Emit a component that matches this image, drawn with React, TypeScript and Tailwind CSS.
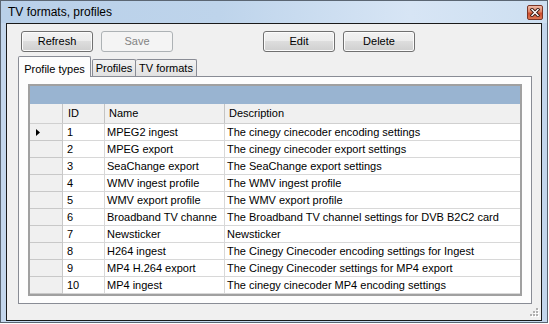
import React from "react";

const rows: [string, string, string][] = [
  ["1", "MPEG2 ingest", "The cinegy cinecoder encoding settings"],
  ["2", "MPEG export", "The cinegy cinecoder export settings"],
  ["3", "SeaChange export", "The SeaChange export settings"],
  ["4", "WMV ingest profile", "The WMV ingest profile"],
  ["5", "WMV export profile", "The WMV export profile"],
  ["6", "Broadband TV channe", "The Broadband TV channel settings for DVB B2C2 card"],
  ["7", "Newsticker", "Newsticker"],
  ["8", "H264 ingest", "The Cinegy Cinecoder encoding settings for Ingest"],
  ["9", "MP4 H.264 export", "The Cinegy Cinecoder settings for MP4 export"],
  ["10", "MP4 ingest", "The cinegy cinecoder MP4 encoding settings"],
];

function Btn({ label, disabled }: { label: string; disabled?: boolean }) {
  return (
    <div
      className={
        disabled
          ? "w-[72px] h-[21px] rounded-[3px] border border-[#adb2b5] bg-[#f4f4f4] text-[#838383] flex items-center justify-center text-[11px]"
          : "w-[72px] h-[21px] rounded-[3px] border border-[#707070] bg-[linear-gradient(to_bottom,#f2f2f2_0%,#ebebeb_50%,#dddddd_50%,#cfcfcf_100%)] shadow-[inset_0_0_0_1px_#fbfbfb] text-black flex items-center justify-center text-[11px]"
      }
    >
      {label}
    </div>
  );
}

export default function App() {
  return (
    <div className="w-[549px] h-[324px] bg-white font-['Liberation_Sans',Arial,sans-serif] overflow-hidden">
      <div className="relative w-[548px] h-[323px] border border-[#5b6673] bg-[#c3d6ec] flex flex-col">
        {/* title bar */}
        <div className="h-[22px] flex items-center pl-[7px] bg-[linear-gradient(to_right,#b9d0e9_0%,#bed4eb_40%,#d7e5f5_75%,#cddff1_100%)]">
          <span className="text-[12px] text-black leading-none">TV formats, profiles</span>
        </div>
        <div className="absolute left-[526px] top-[4px] w-[16px] h-[15px] rounded-[2px] border border-[#7a3527] bg-[linear-gradient(to_bottom,#eeb9a6_0%,#e08466_45%,#cd4b2c_55%,#dc7654_100%)] flex items-center justify-center">
          <svg width="10" height="9" viewBox="0 0 10 9">
            <path d="M2 1.5 L8 7.5 M8 1.5 L2 7.5" stroke="#3a1a14" strokeWidth="3.2" strokeLinecap="square" />
            <path d="M2 1.5 L8 7.5 M8 1.5 L2 7.5" stroke="#ffffff" strokeWidth="1.4" strokeLinecap="square" />
          </svg>
        </div>
        {/* body */}
        <div className="flex px-[5px]">
          <div className="relative w-[536px] h-[298px] border border-[#1a1a1a] bg-[#f0f0f0] flex flex-col">
            {/* buttons */}
            <div className="flex pt-[7px] pl-[14px]">
              <Btn label="Refresh" />
              <div className="ml-[8px]">
                <Btn label="Save" disabled />
              </div>
              <div className="ml-[90px]">
                <Btn label="Edit" />
              </div>
              <div className="ml-[8px]">
                <Btn label="Delete" />
              </div>
            </div>
            {/* tabs */}
            <div className="flex items-end h-[20px] mt-[4px] ml-[11px] text-[11px] text-black">
              <div className="relative z-10 w-[73px] h-[21px] -mb-px border-x border-t border-[#898c95] bg-[#fdfdfd] flex items-start justify-center pt-[4px] rounded-t-[2px]">
                Profile types
              </div>
              <div className="ml-[1px] w-[44px] h-[17px] border-x border-t border-[#898c95] bg-[linear-gradient(to_bottom,#f2f2f2,#e1e1e1)] flex items-center justify-center rounded-t-[2px]">
                Profiles
              </div>
              <div className="w-[61px] h-[17px] border-r border-t border-[#898c95] bg-[linear-gradient(to_bottom,#f2f2f2,#e1e1e1)] flex items-center justify-center rounded-t-[2px]">
                TV formats
              </div>
            </div>
            {/* panel */}
            <div className="ml-[11px] w-[514px] h-[228px] border border-[#898c95] bg-[#fdfdfd] pt-[7px] px-[9px]">
              <div className="w-[494px] h-[212px] border-2 border-[#a0a0a0] bg-[#ababab] flex flex-col text-[11px] text-black">
                <div className="h-[18px] bg-[#99b4d1] shrink-0" />
                <div className="h-[20px] flex bg-[#f0f0f0] shrink-0 border-b border-[#d0d0d0]">
                  <div className="w-[33px] border-r border-[#c4c4c4]" />
                  <div className="w-[42px] border-r border-[#c4c4c4] pl-[5px] flex items-center">ID</div>
                  <div className="w-[120px] border-r border-[#c4c4c4] pl-[4px] flex items-center">Name</div>
                  <div className="flex-1 pl-[4px] flex items-center">Description</div>
                </div>
                {rows.map((r, i) => (
                  <div key={i} className="h-[17px] flex shrink-0">
                    <div className="w-[33px] bg-[#f0f0f0] border-r border-b border-[#c8c8c8] flex items-center pl-[6px]">
                      {i === 0 && (
                        <svg width="4" height="7" viewBox="0 0 4 7">
                          <path d="M0 0 L4 3.5 L0 7 Z" fill="#000" />
                        </svg>
                      )}
                    </div>
                    <div className="w-[42px] bg-white border-r border-b border-[#d8d8d8] pl-[4px] flex items-center whitespace-nowrap overflow-hidden">
                      {r[0]}
                    </div>
                    <div className="w-[120px] bg-white border-r border-b border-[#d8d8d8] pl-[2px] flex items-center whitespace-nowrap overflow-hidden">
                      {r[1]}
                    </div>
                    <div className="flex-1 bg-white border-b border-[#d8d8d8] pl-[2px] flex items-center whitespace-nowrap overflow-hidden">
                      {r[2]}
                    </div>
                  </div>
                ))}
              </div>
            </div>
            {/* size grip */}
            <div className="absolute right-[2px] bottom-[3px]">
              <svg width="10" height="10" viewBox="0 0 10 10">
                {[
                  [7, 1],
                  [4, 4],
                  [7, 4],
                  [1, 7],
                  [4, 7],
                  [7, 7],
                ].map(([x, y], k) => (
                  <g key={k}>
                    <rect x={x + 1} y={y + 1} width="2" height="2" fill="#ffffff" />
                    <rect x={x} y={y} width="2" height="2" fill="#b0b0b0" />
                  </g>
                ))}
              </svg>
            </div>
          </div>
        </div>
      </div>
    </div>
  );
}
